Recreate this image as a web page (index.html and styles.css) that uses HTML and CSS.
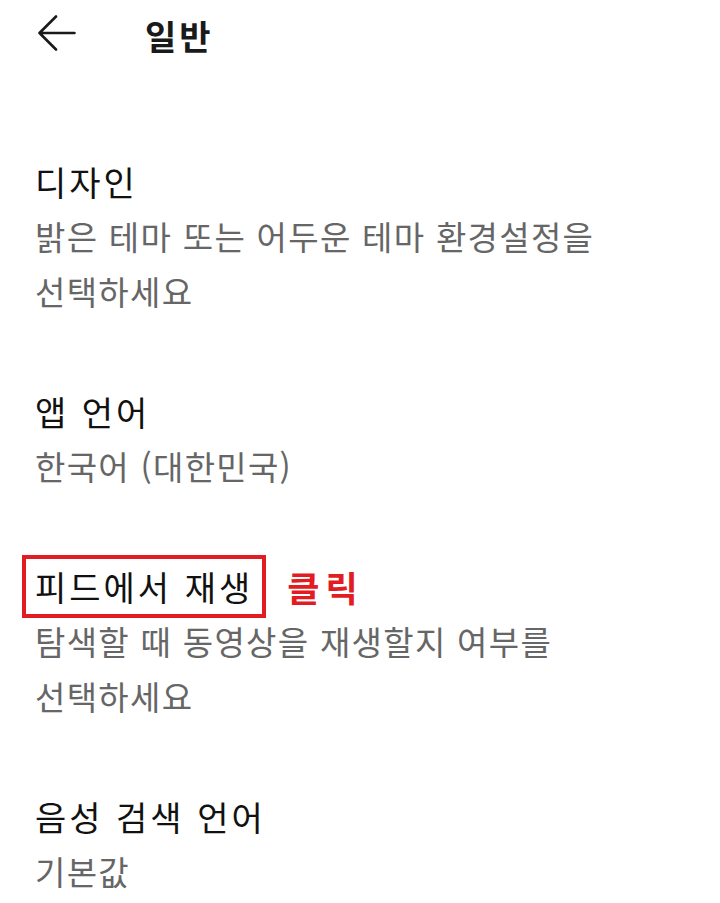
FILE: index.html
```html
<!DOCTYPE html>
<html lang="ko">
<head>
<meta charset="utf-8">
<title>일반</title>
<link rel="stylesheet" href="styles.css">
</head>
<body>
<header class="topbar">
  <svg class="back" width="40" height="36" viewBox="0 0 40 36" aria-hidden="true">
    <path d="M2.5 18 H37.5 M19 1.5 L2.5 18 L19 34.5" fill="none" stroke="#1a1a1a" stroke-width="2.6" stroke-linecap="round" stroke-linejoin="round"/>
  </svg>
  <h1 class="page-title">일반</h1>
</header>
<main class="settings">
  <section class="item">
    <div class="item-title">디자인</div>
    <div class="item-desc">밝은 테마 또는 어두운 테마 환경설정을<br>선택하세요</div>
  </section>
  <section class="item">
    <div class="item-title">앱 언어</div>
    <div class="item-desc">한국어 (대한민국)</div>
  </section>
  <section class="item">
    <div class="item-title"><span class="highlight">피드에서 재생</span><span class="click-note">클릭</span></div>
    <div class="item-desc">탐색할 때 동영상을 재생할지 여부를<br>선택하세요</div>
  </section>
  <section class="item">
    <div class="item-title">음성 검색 언어</div>
    <div class="item-desc">기본값</div>
  </section>
</main>
</body>
</html>
```

FILE: styles.css
```css
html, body {
  margin: 0;
  padding: 0;
  background: #ffffff;
}
body {
  font-family: "Noto Sans CJK KR", "Noto Sans", sans-serif;
  color: #1a1a1a;
  width: 720px;
  height: 903px;
  overflow: hidden;
}
.topbar {
  display: flex;
  align-items: center;
  height: 65px;
  padding-left: 37px;
}
.back {
  display: block;
  flex: none;
}
.page-title {
  margin: 0 0 0 68px;
  font-size: 34px;
  font-weight: 700;
  letter-spacing: 3px;
  line-height: 65px;
  padding-top: 6px;
}
.settings {
  padding: 89px 35px 0 35px;
  display: flex;
  flex-direction: column;
  gap: 65px;
}
.item-title {
  font-size: 34px;
  line-height: 55px;
  letter-spacing: 3px;
  color: #111111;
  display: flex;
  align-items: center;
}
.item-desc {
  font-size: 33px;
  line-height: 55px;
  letter-spacing: 1.3px;
  color: #666666;
}
.highlight {
  border: 4px solid #e31b23;
  padding: 0 9px 0 9px;
  margin: -4px 0 -4px -13px;
  line-height: 55px;
}
.click-note {
  margin-left: 21px;
  color: #e31b23;
  font-weight: 700;
  font-size: 35px;
  letter-spacing: 6px;
}
```
